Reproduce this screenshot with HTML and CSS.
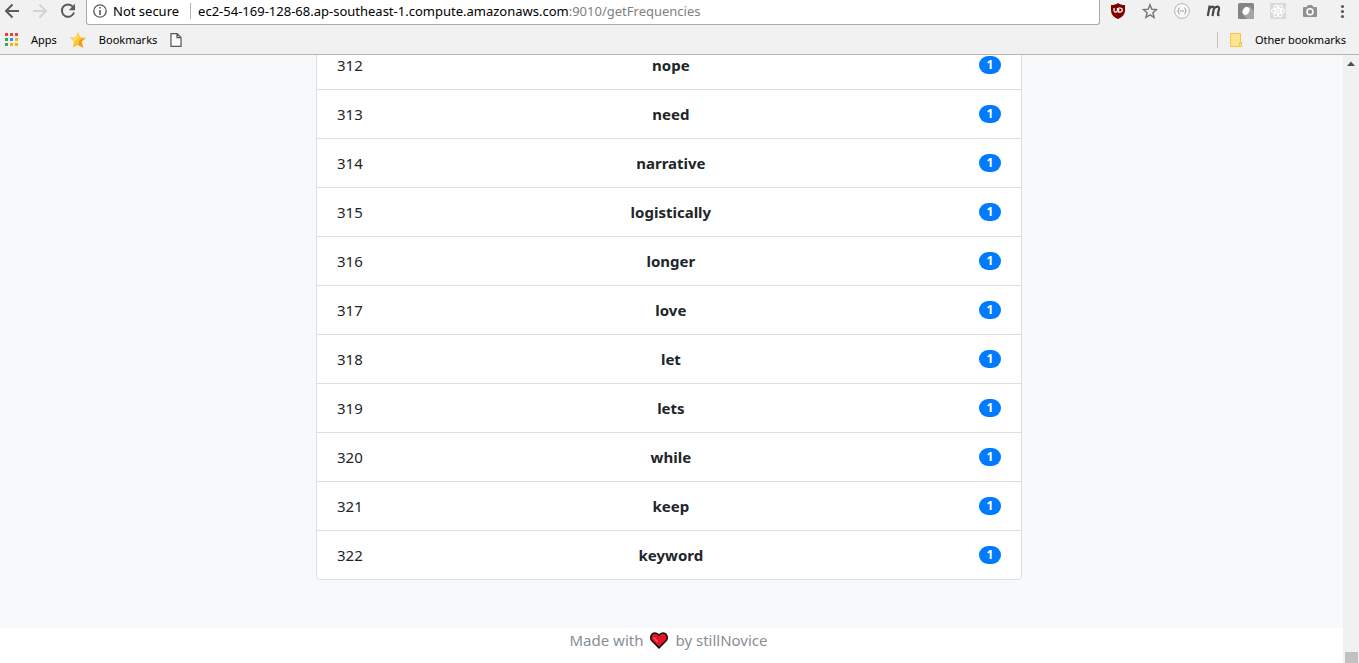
FILE: index.html
```html
<!DOCTYPE html>
<html lang="en">
<head>
<meta charset="utf-8">
<title>Frequencies</title>
<link rel="stylesheet" href="styles.css">
</head>
<body>
<header class="chrome">
  <div class="toolbar">
    <nav class="nav-buttons" aria-label="History">
      <button class="icon-btn" aria-label="Back"><svg width="16" height="16" viewBox="0 0 16 16"><path d="M15 8H2M8.500 1.500 2 8l6.500 6.500" fill="none" stroke="#5a5a5a" stroke-width="2"/></svg></button>
      <button class="icon-btn" aria-label="Forward"><svg width="16" height="16" viewBox="0 0 16 16"><path d="M1 8h13M7.500 1.500 14 8l-6.500 6.500" fill="none" stroke="#d3d3d3" stroke-width="2"/></svg></button>
      <button class="icon-btn" aria-label="Reload"><svg width="16" height="16" viewBox="0 0 16 16"><path d="M12.800 3.600A6.200 6.200 0 1 0 14 9.500" fill="none" stroke="#5a5a5a" stroke-width="2"/><path d="M15 .8v6.400H8.800z" fill="#5a5a5a"/></svg></button>
    </nav>
    <div class="omnibox">
      <button class="security"><svg width="14" height="14" viewBox="0 0 14 14"><circle cx="7" cy="7" r="6.200" fill="none" stroke="#5a5a5a" stroke-width="1.300"/><path d="M6.200 3h1.600v1.600H6.200zM6.200 6h1.600v5H6.200z" fill="#5a5a5a"/></svg><span>Not secure</span></button>
      <div class="url" role="textbox" aria-label="Address" contenteditable="true" spellcheck="false">ec2-54-169-128-68.ap-southeast-1.compute.amazonaws.com<span class="url-path">:9010/getFrequencies</span></div>
    </div>
    <div class="extensions">
      <button class="icon-btn" aria-label="uBlock Origin"><svg width="16" height="16" viewBox="0 0 16 16"><path d="M8 0c2 1.500 4 2 7 2v5c0 4.500-2.500 7-7 9-4.500-2-7-4.500-7-9V2c3 0 5-.5 7-2z" fill="#800000"/><path d="M4 5v2.600q0 1.600 1.700 1.600T7.400 7.600V5M8.700 5v4.200h1.300q2.200 0 2.200-2.100T10 5z" fill="none" stroke="#fff" stroke-width="1.200"/></svg></button>
      <button class="icon-btn" aria-label="Bookmark this page"><svg width="16" height="16" viewBox="0 0 16 16"><path d="m8 1.700 1.800 4.600 4.800.3-3.700 3.100 1.200 4.700L8 11.800l-4.100 2.600 1.200-4.700-3.700-3.100 4.800-.3z" fill="none" stroke="#777" stroke-width="1.400"/></svg></button>
      <button class="icon-btn" aria-label="JSON viewer"><svg width="16" height="16" viewBox="0 0 16 16"><circle cx="8" cy="8" r="7.400" fill="#fafafa" stroke="#b3b3b3"/><path d="M5.600 4.800c-1.300 0-.8 1.200-.9 2.200 0 .6-.7 1-1.200 1 .5 0 1.200.4 1.200 1 .1 1-.4 2.200.9 2.200m4.800-6.400c1.300 0 .8 1.200.9 2.200 0 .6.700 1 1.200 1-.5 0-1.200.4-1.200 1-.1 1 .4 2.200-.9 2.200M6 8h4" fill="none" stroke="#999"/></svg></button>
      <button class="icon-btn" aria-label="Momentum"><svg width="16" height="16" viewBox="0 0 16 16"><path d="M3.700 2.500 1.800 13M3.200 6C5 3 8.300 2.800 7.800 6L6.500 13M7.800 6c2-3 5.700-3.200 5.200 0l-1.100 5c-.2 1.200.3 1.200 1.600 1" fill="none" stroke="#484848" stroke-width="2.200"/></svg></button>
      <button class="icon-btn" aria-label="Extension"><svg width="16" height="16" viewBox="0 0 16 16"><rect width="16" height="16" rx="1.500" fill="#858585"/><path d="M11 3l5 5v6a2 2 0 0 1-2 2H9l-4-4z" fill="#a5a5a5"/><ellipse cx="8" cy="7.800" rx="3.200" ry="4.200" transform="rotate(30 8 7.800)" fill="#fff"/></svg></button>
      <button class="icon-btn" aria-label="React tools"><svg width="16" height="16" viewBox="0 0 16 16"><rect width="16" height="16" fill="#dadada"/><g fill="none" stroke="#fff" stroke-width="1.100"><ellipse cx="8" cy="8" rx="6.500" ry="2.600"/><ellipse cx="8" cy="8" rx="6.500" ry="2.600" transform="rotate(60 8 8)"/><ellipse cx="8" cy="8" rx="6.500" ry="2.600" transform="rotate(120 8 8)"/></g><circle cx="8" cy="8" r="1.500" fill="#fff"/></svg></button>
      <button class="icon-btn" aria-label="Screenshot"><svg width="16" height="16" viewBox="0 0 16 16"><path d="M2 4h2.500L6 2h4l1.500 2H14a1 1 0 0 1 1 1v8a1 1 0 0 1-1 1H2a1 1 0 0 1-1-1V5a1 1 0 0 1 1-1z" fill="#919191"/><circle cx="8" cy="8.800" r="3" fill="#919191" stroke="#fff" stroke-width="1.600"/></svg></button>
      <button class="icon-btn" aria-label="Menu"><svg width="16" height="16" viewBox="0 0 16 16"><g fill="#5a5a5a"><circle cx="8.500" cy="3.500" r="1.600"/><circle cx="8.500" cy="8.500" r="1.600"/><circle cx="8.500" cy="13.500" r="1.600"/></g></svg></button>
    </div>
  </div>
  <nav class="bookmarks" aria-label="Bookmarks">
    <a class="bookmark" href="#"><svg width="13" height="13" viewBox="0 0 13 13"><path d="M0 0h3v3H0zM5 0h3v3H5zM10 0h3v3h-3z" fill="#ea4335"/><path d="M0 5h3v3H0zM0 10h3v3H0z" fill="#34a853"/><path d="M5 5h3v3H5z" fill="#2a8cff"/><path d="M10 5h3v3h-3zM5 10h3v3H5zM10 10h3v3h-3z" fill="#fbb30b"/></svg><span>Apps</span></a>
    <a class="bookmark" href="#"><svg width="16" height="16" viewBox="0 0 16 16"><path d="m8 0 2.200 5.300 5.800.4-4.400 3.900 1.500 6.100L8.200 13l-5.500 2.500 1.500-5.800L0 5.800l5.800-.5z" fill="#fbc430"/><path d="m16 5.700-4.400 3.900 1.500 6.100L8.200 13l1.500-5.200z" fill="#f59b18"/><path d="m8 1.500 1.200 4.300-5 3.800L1.500 6.300l5-.4z" fill="#ffdc62"/></svg><span>Bookmarks</span></a>
    <a class="bookmark" href="#" aria-label="Untitled page"><svg width="12" height="14" viewBox="0 0 12 14"><path d="M1 .6h6l4 4v8.800H1zM7 .6v4h4" fill="#fafafa" stroke="#555" stroke-width="1.200"/></svg></a>
    <a class="bookmark other" href="#"><svg width="12" height="14" viewBox="0 0 12 14"><path d="M.5.5h10v9h1v4H.5z" fill="#ffe591" stroke="#eec649"/><path d="M9.500 13V10h1.500" fill="none" stroke="#eec649"/></svg><span>Other bookmarks</span></a>
  </nav>
</header>
<div class="viewport">
  <div class="page">
    <main class="results">
      <ul class="list">
        <li class="row"><span>312</span><b>nope</b><span class="badge">1</span></li>
        <li class="row"><span>313</span><b>need</b><span class="badge">1</span></li>
        <li class="row"><span>314</span><b>narrative</b><span class="badge">1</span></li>
        <li class="row"><span>315</span><b>logistically</b><span class="badge">1</span></li>
        <li class="row"><span>316</span><b>longer</b><span class="badge">1</span></li>
        <li class="row"><span>317</span><b>love</b><span class="badge">1</span></li>
        <li class="row"><span>318</span><b>let</b><span class="badge">1</span></li>
        <li class="row"><span>319</span><b>lets</b><span class="badge">1</span></li>
        <li class="row"><span>320</span><b>while</b><span class="badge">1</span></li>
        <li class="row"><span>321</span><b>keep</b><span class="badge">1</span></li>
        <li class="row"><span>322</span><b>keyword</b><span class="badge">1</span></li>
      </ul>
    </main>
    <footer class="footer"><span>Made with</span><svg class="heart" width="18" height="17" viewBox="0 0 18 17" role="img" aria-label="love"><path d="M9 15.900 1.700 8.500C-.5 5.500 1.500 1 5 1c2 0 3.200 1 4 2.300C9.800 2 11 1 13 1c3.500 0 5.500 4.500 3.300 7.500z" fill="#e81224" stroke="#111" stroke-width="1.500"/><path d="m4 5.500 3.500 4.500" stroke="#f4616c" stroke-width="1.600"/></svg><span>by stillNovice</span></footer>
  </div>
  <div class="scrollbar" aria-hidden="true">
    <svg width="16" height="17" viewBox="0 0 16 17"><path d="M4 11l4-4.500 4 4.500z" fill="#505050"/></svg>
    <div class="thumb"></div>
  </div>
</div>
</body>
</html>
```
FILE: styles.css
```css
* { box-sizing: border-box; }

body {
  margin: 0;
  height: 100vh;
  display: flex;
  flex-direction: column;
  overflow: hidden;
  background: #fff;
  color: #212529;
  font-family: "Segoe UI", "Noto Sans", "Open Sans", sans-serif;
}

button {
  border: 0;
  padding: 0;
  background: none;
  color: inherit;
  font: inherit;
}

svg { display: block; flex: none; }

.chrome {
  flex: none;
  background: #f1f1f1;
  border-bottom: 1px solid #b6b4b6;
  color: #000;
}

.toolbar {
  display: flex;
  height: 25px;
}

.nav-buttons {
  display: flex;
  gap: 12px;
  padding: 3px 10px 0 4px;
}

.icon-btn {
  width: 16px;
  height: 16px;
}

.omnibox {
  flex: 1;
  display: flex;
  align-items: center;
  min-width: 0;
  padding-left: 6px;
  padding-bottom: 2px;
  background: #fff;
  border: 1px solid #a9a9a9;
  border-top: 0;
  border-radius: 0 0 3px 3px;
  font-size: 13px;
  line-height: 16px;
}

.security {
  display: flex;
  align-items: center;
  gap: 6px;
  padding-right: 11px;
  border-right: 1px solid #b4b4b4;
  white-space: nowrap;
}

.url {
  flex: 1;
  padding-left: 7px;
  white-space: nowrap;
  overflow: hidden;
  outline: 0;
}

.url-path { color: #808080; }

.extensions {
  display: flex;
  gap: 16px;
  padding: 3px 9px 0 10px;
}

.bookmarks {
  display: flex;
  align-items: center;
  height: 29px;
  padding: 0 13px 0 5px;
  gap: 13px;
  font-size: 11px;
  line-height: 16px;
}

.bookmark {
  display: flex;
  align-items: center;
  gap: 13px;
  color: inherit;
  text-decoration: none;
  white-space: nowrap;
}

.other {
  margin-left: auto;
  padding-left: 12px;
  border-left: 1px solid #c4c4c4;
}

.viewport {
  flex: 1;
  display: flex;
  min-height: 0;
}

.page {
  flex: 1;
  display: flex;
  flex-direction: column;
}

.results {
  flex: 1;
  display: flex;
  flex-direction: column;
  justify-content: flex-end;
  align-items: center;
  min-height: 0;
  overflow: hidden;
  padding: 0 21px 48px 16px;
  background: #f8f9fb;
}

.list {
  width: 100%;
  max-width: 706px;
  margin: 0;
  padding: 0;
  list-style: none;
  background: #fff;
  border: 1px solid #dfdfdf;
  border-radius: 4px;
  font-size: 15px;
  line-height: 24px;
}

.row {
  display: flex;
  align-items: center;
  justify-content: space-between;
  padding: 12px 20px;
}

.row + .row { border-top: 1px solid #dfdfdf; }

.badge {
  min-width: 22px;
  padding: 3px 7px;
  border-radius: 10px;
  background: #007bff;
  color: #fff;
  font-size: 12px;
  font-weight: 700;
  line-height: 12px;
  text-align: center;
}

.footer {
  flex: none;
  display: flex;
  justify-content: center;
  gap: 7px;
  height: 35px;
  padding-right: 6px;
  color: #868e96;
  font-size: 15px;
  line-height: 24px;
}

.heart { margin-top: 4px; }

.scrollbar {
  flex: none;
  display: flex;
  flex-direction: column;
  justify-content: space-between;
  width: 16px;
  background: #f1f1f1;
}

.thumb {
  height: 11px;
  margin: 0 1px 0 2px;
  background: #c1c1c1;
}
```
